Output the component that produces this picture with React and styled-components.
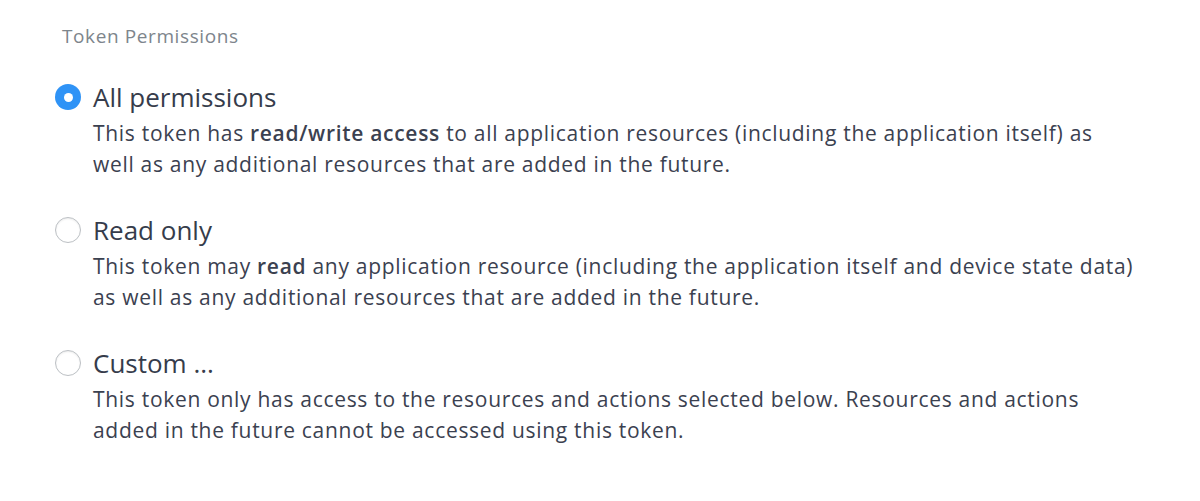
import React from "react";
import styled, { createGlobalStyle } from "styled-components";

const GlobalStyle = createGlobalStyle`
  body {
    margin: 0;
    background: #fff;
    font-family: "Open Sans", "Noto Sans", sans-serif;
    color: #3b4150;
  }
`;

const Page = styled.section`
  padding: 24px 0 0 55px;
  width: 1200px;
  height: 501px;
  box-sizing: border-box;
`;

const Heading = styled.h2`
  margin: 0 0 0 7px;
  font-size: 19px;
  font-weight: 400;
  letter-spacing: 0.6px;
  color: #7d858c;
  line-height: 24px;
`;

const Options = styled.ul`
  list-style: none;
  margin: 32px 0 0;
  padding: 0;
  display: flex;
  flex-direction: column;
  gap: 33px;
`;

const Option = styled.li`
  display: grid;
  grid-template-columns: 26px 1fr;
  column-gap: 12px;
  align-items: center;
`;

const Radio = styled.span`
  width: 26px;
  height: 26px;
  border-radius: 50%;
  box-sizing: border-box;
  border: ${({ checked }) => (checked ? "none" : "1.5px solid #bcc0c4")};
  background: ${({ checked }) => (checked ? "#2f93f6" : "#fff")};
  display: flex;
  align-items: center;
  justify-content: center;
  box-shadow: ${({ checked }) =>
    checked ? "none" : "inset 0 1px 2px rgba(0,0,0,0.08)"};

  &::after {
    content: "";
    display: ${({ checked }) => (checked ? "block" : "none")};
    width: 9px;
    height: 9px;
    border-radius: 50%;
    background: #fff;
  }
`;

const Title = styled.span`
  font-size: 26px;
  line-height: 34px;
  color: #363c4b;
`;

const Description = styled.p`
  grid-column: 2;
  margin: 4px 0 0;
  font-size: 21px;
  letter-spacing: 0.7px;
  line-height: 31px;
  color: #3b4150;
  white-space: nowrap;

  b {
    font-weight: 600;
  }
`;

const options = [
  {
    title: "All permissions",
    checked: true,
    body: (
      <>
        This token has <b>read/write access</b> to all application resources
        (including the application itself) as
        <br />
        well as any additional resources that are added in the future.
      </>
    )
  },
  {
    title: "Read only",
    body: (
      <>
        This token may <b>read</b> any application resource (including the
        application itself and device state data)
        <br />
        as well as any additional resources that are added in the future.
      </>
    )
  },
  {
    title: "Custom ...",
    body: (
      <>
        This token only has access to the resources and actions selected
        below. Resources and actions
        <br />
        added in the future cannot be accessed using this token.
      </>
    )
  }
];

export default function App() {
  return (
    <>
      <GlobalStyle />
      <Page>
        <Heading>Token Permissions</Heading>
        <Options>
          {options.map(option => (
            <Option key={option.title}>
              <Radio checked={option.checked} />
              <Title>{option.title}</Title>
              <Description>{option.body}</Description>
            </Option>
          ))}
        </Options>
      </Page>
    </>
  );
}
